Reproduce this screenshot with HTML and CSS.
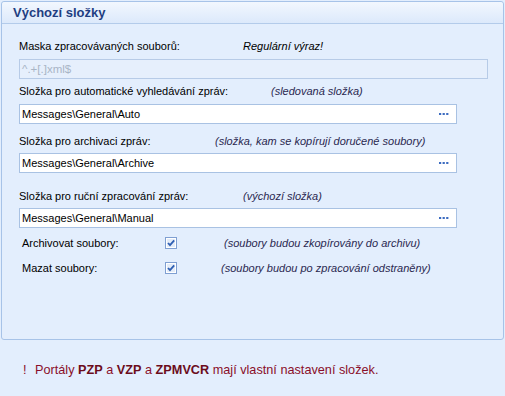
FILE: index.html
```html
<!DOCTYPE html>
<html lang="cs">
<head>
<meta charset="utf-8">
<link rel="stylesheet" href="styles.css">
</head>
<body>
<div class="panel">
  <div class="header">Výchozí složky</div>
  <div class="content">
    <div class="row r1">
      <span class="label">Maska zpracovávaných souborů:</span>
      <span class="note n1 plain">Regulární výraz!</span>
    </div>
    <div class="field wide disabled"><span class="val">^.+[.]xml$</span></div>

    <div class="row r2">
      <span class="label">Složka pro automatické vyhledávání zpráv:</span>
      <span class="note n2">(sledovaná složka)</span>
    </div>
    <div class="field"><span class="val">Messages\General\Auto</span><svg class="dots" width="12" height="3" viewBox="0 0 12 3"><rect x="0" y="0" width="2.2" height="2" fill="#3c6cc0"/><rect x="3.6" y="0" width="2.2" height="2" fill="#3c6cc0"/><rect x="7.2" y="0" width="2.2" height="2" fill="#3c6cc0"/></svg></div>

    <div class="row r3">
      <span class="label">Složka pro archivaci zpráv:</span>
      <span class="note n3">(složka, kam se kopírují doručené soubory)</span>
    </div>
    <div class="field"><span class="val">Messages\General\Archive</span><svg class="dots" width="12" height="3" viewBox="0 0 12 3"><rect x="0" y="0" width="2.2" height="2" fill="#3c6cc0"/><rect x="3.6" y="0" width="2.2" height="2" fill="#3c6cc0"/><rect x="7.2" y="0" width="2.2" height="2" fill="#3c6cc0"/></svg></div>

    <div class="row r4">
      <span class="label">Složka pro ruční zpracování zpráv:</span>
      <span class="note n4">(výchozí složka)</span>
    </div>
    <div class="field"><span class="val">Messages\General\Manual</span><svg class="dots" width="12" height="3" viewBox="0 0 12 3"><rect x="0" y="0" width="2.2" height="2" fill="#3c6cc0"/><rect x="3.6" y="0" width="2.2" height="2" fill="#3c6cc0"/><rect x="7.2" y="0" width="2.2" height="2" fill="#3c6cc0"/></svg></div>

    <div class="check-row c1">
      <span class="clabel">Archivovat soubory:</span>
      <svg class="cb" width="12" height="12" viewBox="0 0 12 12"><rect x="0.5" y="0.5" width="11" height="11" fill="#ffffff" stroke="#7f9fd2"/><rect x="2" y="2" width="8" height="8" fill="#e4ecf8"/><path d="M3 6 L5 8.2 L9.2 3.4" fill="none" stroke="#2f5fb3" stroke-width="1.8"/></svg>
      <span class="note cn1">(soubory budou zkopírovány do archivu)</span>
    </div>
    <div class="check-row c2">
      <span class="clabel">Mazat soubory:</span>
      <svg class="cb" width="12" height="12" viewBox="0 0 12 12"><rect x="0.5" y="0.5" width="11" height="11" fill="#ffffff" stroke="#7f9fd2"/><rect x="2" y="2" width="8" height="8" fill="#e4ecf8"/><path d="M3 6 L5 8.2 L9.2 3.4" fill="none" stroke="#2f5fb3" stroke-width="1.8"/></svg>
      <span class="note cn2">(soubory budou po zpracování odstraněny)</span>
    </div>
  </div>
</div>
<div class="footer">
  <span class="bang">!</span>
  <span>Portály <b>PZP</b> a <b>VZP</b> a <b>ZPMVCR</b> mají vlastní nastavení složek.</span>
</div>
</body>
</html>
```

FILE: styles.css
```css
html, body {
  margin: 0;
  padding: 0;
}
body {
  background: #e3eefd;
  font-family: "Liberation Sans", Arial, sans-serif;
  font-size: 11px;
  color: #000;
  width: 505px;
  height: 396px;
  overflow: hidden;
}
.panel {
  margin: 1px 1px 0 1px;
  height: 337px;
  border: 1px solid #a7c3e8;
  border-radius: 3px;
  background: #e3eefd;
  box-sizing: content-box;
}
.header {
  height: 21px;
  line-height: 21px;
  padding-left: 11px;
  border-bottom: 1px solid #b3cbea;
  background: linear-gradient(#f2f7fe, #dce9fb);
  border-radius: 3px 3px 0 0;
  font-size: 13px;
  font-weight: bold;
  color: #1f3e82;
}
.content {
  padding-left: 17px;
}
.row {
  display: flex;
  height: 14px;
  line-height: 14px;
}
.r1 { margin-top: 15px; }
.r2 { margin-top: 5px; }
.r3 { margin-top: 10px; }
.r4 { margin-top: 16px; }
.label {
  flex: none;
}
.note {
  font-style: italic;
  color: #2a2850;
  white-space: nowrap;
}
.note.plain { color: #000; }
.r1 .label { width: 224px; }
.r2 .label { width: 252px; }
.r3 .label { width: 196px; }
.r4 .label { width: 224px; }
.field {
  display: flex;
  align-items: center;
  box-sizing: border-box;
  width: 438px;
  height: 20px;
  margin-top: 5px;
  border: 1px solid #a9c2e3;
  background: #fff;
  padding-left: 2px;
  padding-right: 5px;
}
.r1 + .field { margin-top: 6px; }
.r2 + .field { margin-top: 6px; }
.field.wide { width: 469px; }
.field.disabled {
  background: #e6effc;
  border-color: #b7cbe7;
  color: #a9b5c6;
  font-size: 11.5px;
}
.val { flex: 1; white-space: nowrap; }
.dots { display: block; flex: none; }
.check-row {
  display: flex;
  align-items: center;
  height: 14px;
  line-height: 14px;
  padding-left: 3px;
}
.c1 { margin-top: 8px; }
.c2 { margin-top: 11px; }
.clabel { width: 143px; flex: none; }
.cb { display: block; flex: none; }
.cn1 { margin-left: 47px; }
.cn2 { margin-left: 44px; }
.footer {
  margin-top: 22px;
  padding-left: 23px;
  display: flex;
  font-size: 12.7px;
  line-height: 16px;
  color: #8a0e2a;
}
.bang { width: 12px; flex: none; }
.footer b { color: #6b0c1c; }
```
